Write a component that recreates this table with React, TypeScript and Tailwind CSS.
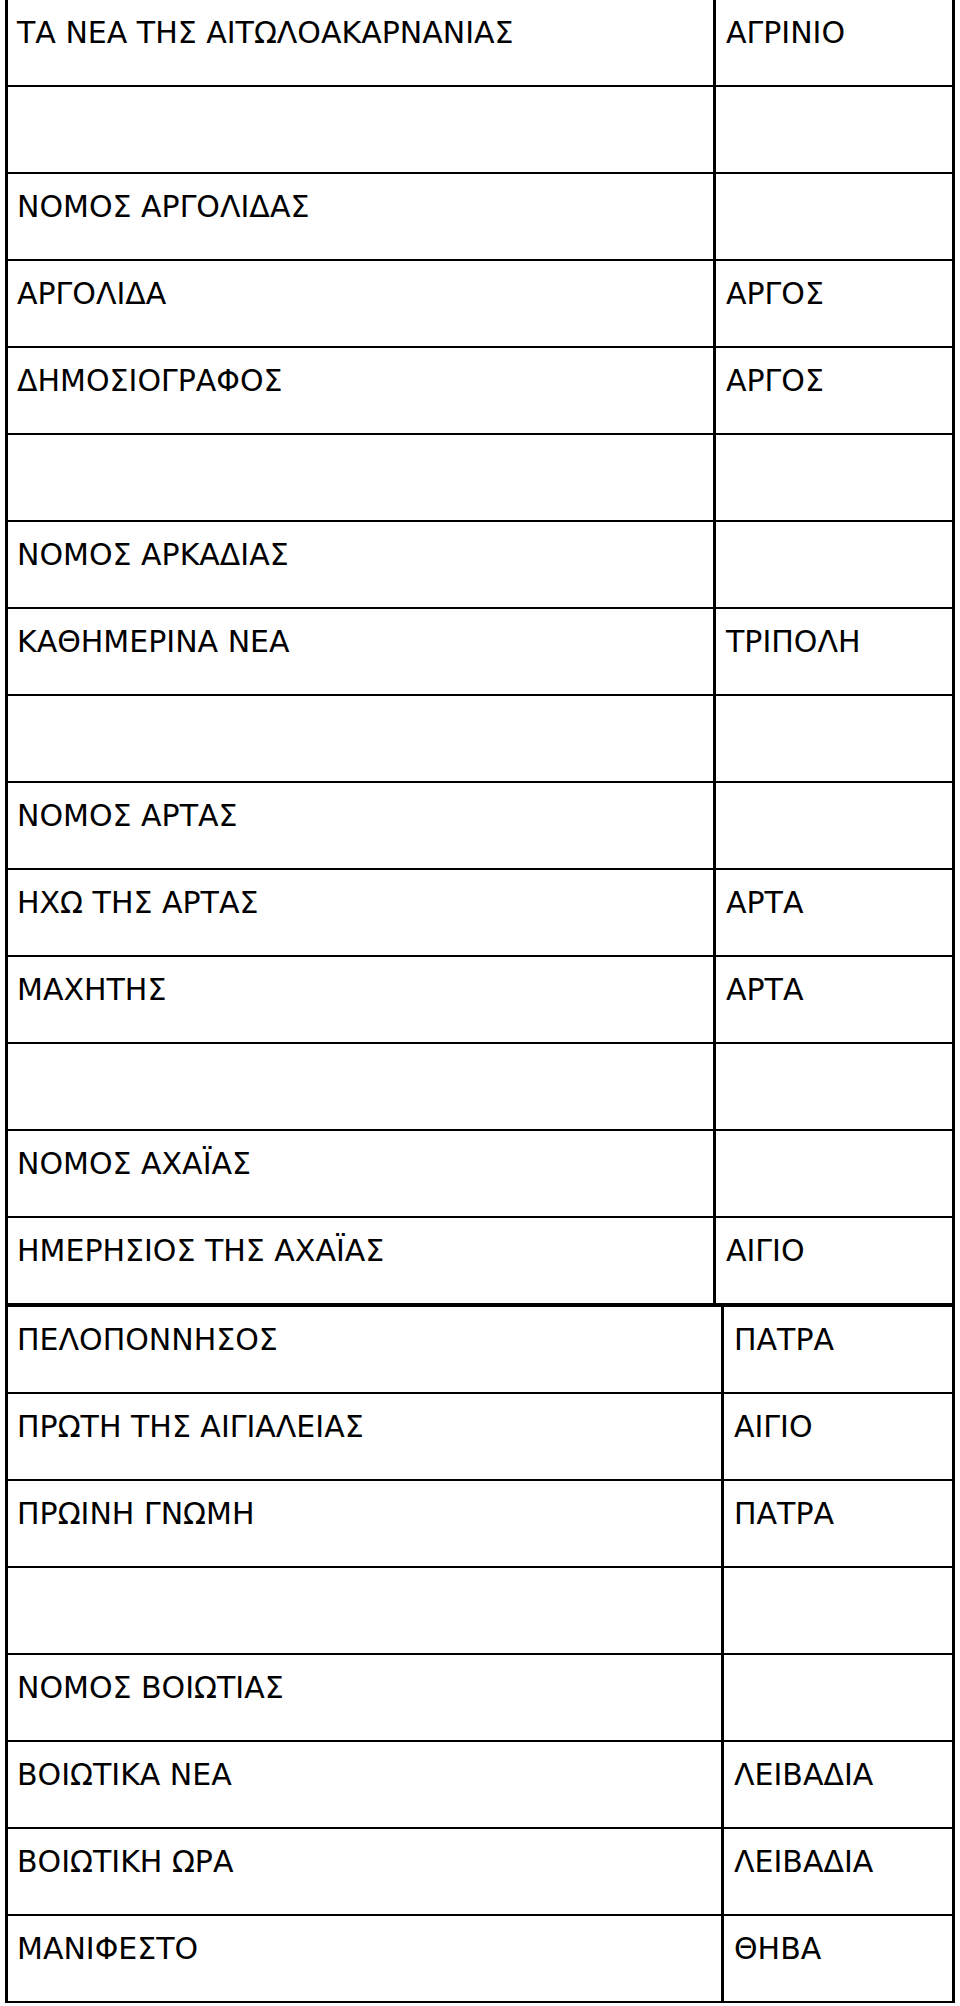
const tableOne: [string, string][] = [
  ['ΤΑ ΝΕΑ ΤΗΣ ΑΙΤΩΛΟΑΚΑΡΝΑΝΙΑΣ', 'ΑΓΡΙΝΙΟ'],
  ['', ''],
  ['ΝΟΜΟΣ ΑΡΓΟΛΙΔΑΣ', ''],
  ['ΑΡΓΟΛΙΔΑ', 'ΑΡΓΟΣ'],
  ['ΔΗΜΟΣΙΟΓΡΑΦΟΣ', 'ΑΡΓΟΣ'],
  ['', ''],
  ['ΝΟΜΟΣ ΑΡΚΑΔΙΑΣ', ''],
  ['ΚΑΘΗΜΕΡΙΝΑ ΝΕΑ', 'ΤΡΙΠΟΛΗ'],
  ['', ''],
  ['ΝΟΜΟΣ ΑΡΤΑΣ', ''],
  ['ΗΧΩ ΤΗΣ ΑΡΤΑΣ', 'ΑΡΤΑ'],
  ['ΜΑΧΗΤΗΣ', 'ΑΡΤΑ'],
  ['', ''],
  ['ΝΟΜΟΣ ΑΧΑΪΑΣ', ''],
  ['ΗΜΕΡΗΣΙΟΣ ΤΗΣ ΑΧΑΪΑΣ', 'ΑΙΓΙΟ'],
]

const tableTwo: [string, string][] = [
  ['ΠΕΛΟΠΟΝΝΗΣΟΣ', 'ΠΑΤΡΑ'],
  ['ΠΡΩΤΗ ΤΗΣ ΑΙΓΙΑΛΕΙΑΣ', 'ΑΙΓΙΟ'],
  ['ΠΡΩΙΝΗ ΓΝΩΜΗ', 'ΠΑΤΡΑ'],
  ['', ''],
  ['ΝΟΜΟΣ ΒΟΙΩΤΙΑΣ', ''],
  ['ΒΟΙΩΤΙΚΑ ΝΕΑ', 'ΛΕΙΒΑΔΙΑ'],
  ['ΒΟΙΩΤΙΚΗ ΩΡΑ', 'ΛΕΙΒΑΔΙΑ'],
  ['ΜΑΝΙΦΕΣΤΟ', 'ΘΗΒΑ'],
]

function Row({ name, city, wide }: { name: string; city: string; wide: boolean }) {
  return (
    <div
      className={
        wide
          ? 'grid grid-cols-[713px_1fr] h-[87px] border-b-2 border-black'
          : 'grid grid-cols-[705px_1fr] h-[87px] border-b-2 border-black'
      }
    >
      <div className="pl-[9px] pt-[15px] leading-[36px] whitespace-nowrap">{name}</div>
      <div className="border-l-[3px] border-black pl-[10px] pt-[15px] leading-[36px] whitespace-nowrap">
        {city}
      </div>
    </div>
  )
}

export default function App() {
  return (
    <div
      className="bg-white text-black text-[30px] pl-[5px] h-[2006px] overflow-hidden"
      style={{ fontFamily: '"DejaVu Sans", Verdana, sans-serif' }}
    >
      <div className="w-[950px] border-x-[3px] border-black">
        {tableOne.map(([name, city], i) => (
          <Row key={i} name={name} city={city} wide={false} />
        ))}
      </div>
      <div className="w-[950px] border-x-[3px] border-t-2 border-black">
        {tableTwo.map(([name, city], i) => (
          <Row key={i} name={name} city={city} wide={true} />
        ))}
      </div>
    </div>
  )
}
